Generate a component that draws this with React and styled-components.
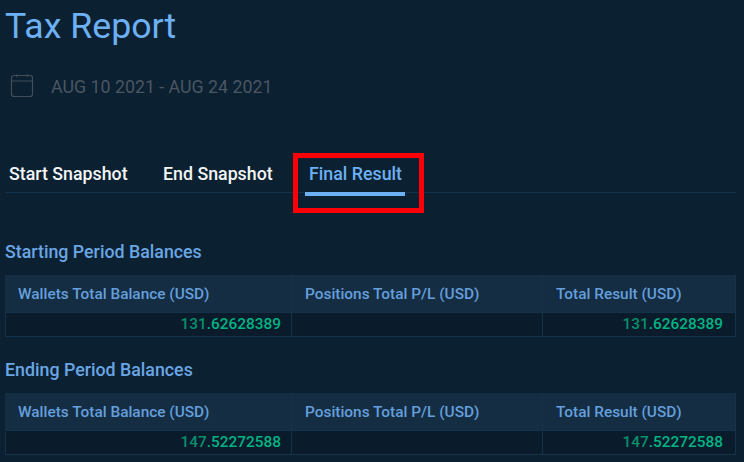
import styled, { createGlobalStyle } from 'styled-components';

const GlobalStyle = createGlobalStyle`
  html, body {
    margin: 0;
    padding: 0;
    width: 744px;
    height: 462px;
    overflow: hidden;
    background-color: #0b2031;
    font-family: Roboto, "Liberation Sans", sans-serif;
  }
`;
const Page = styled.div`
  width: 744px;
  height: 462px;
  padding: 0 8px 0 5px;
  box-sizing: border-box;
  overflow: hidden;
`;
const Title = styled.h1`
  margin: 0;
  height: 52px;
  font-size: 35.7px;
  line-height: 52px;
  font-weight: 400;
  color: #6db0f3;
`;
const DateRow = styled.div`
  display: flex;
  align-items: center;
  gap: 17px;
  height: 28px;
  margin-top: 20px;
  padding-left: 5px;
  font-size: 17.8px;
  color: #4a5662;
`;
const Tabs = styled.div`
  position: relative;
  display: flex;
  box-sizing: border-box;
  height: 53px;
  margin-top: 40px;
  border-bottom: 1px solid #14324a;
`;
const Tab = styled.div`
  box-sizing: border-box;
  width: ${(p) => p.$width}px;
  height: 52px;
  padding-top: 24px;
  padding-left: ${(p) => p.$pad || 0}px;
  font-size: 17.8px;
  line-height: 20px;
  font-weight: 500;
  white-space: nowrap;
  color: ${(p) => (p.$active ? '#6db0f3' : '#f2f4f5')};
`;
const Underline = styled.div`
  width: 100px;
  height: 4px;
  margin: 8px 0 0 -4px;
  background-color: #6db0f3;
`;
const Highlight = styled.div`
  position: absolute;
  left: 288px;
  top: 13px;
  width: 131px;
  height: 60px;
  box-sizing: border-box;
  border: 5px solid #fb0007;
`;
const SectionTitle = styled.h2`
  margin: ${(p) => p.$top}px 0 0;
  height: 20px;
  font-size: 17.8px;
  line-height: 20px;
  font-weight: 500;
  color: #6aa6e4;
`;
const Table = styled.div`
  display: grid;
  grid-template-columns: 287px 251px 193px;
  grid-template-rows: 38px 24px;
  width: 731px;
  margin-top: 13px;
`;
const HeadCell = styled.div`
  box-sizing: border-box;
  padding-left: 13px;
  font-size: 15.4px;
  line-height: 38px;
  font-weight: 500;
  white-space: nowrap;
  color: #659fdc;
  background-color: #142d43;
  border-bottom: 1px solid #14324a;
  border-right: 1px solid #14324a;
`;
const ValueCell = styled.div`
  box-sizing: border-box;
  padding-right: ${(p) => p.$pad || 0}px;
  text-align: right;
  font-size: 15.4px;
  line-height: 22px;
  font-weight: 500;
  color: #00b383;
  background-color: #0a1c2b;
  border-bottom: 1px solid #14324a;
  border-right: 1px solid #14324a;
  &:nth-child(4) {
    border-left: 1px solid #14324a;
  }
`;
const Dim = styled.span`
  color: #078f6c;
`;

const CalendarIcon = () => (
  <svg width="24" height="24" viewBox="0 0 24 24" fill="none" stroke="#414e5a" strokeWidth="1.2">
    <rect x="1.5" y="1.5" width="21" height="21" rx="2.5" />
    <path d="M1.5 7h21M6.5 0.5v2.5M17.5 0.5v2.5" />
  </svg>
);

const BalanceTable = ({ whole, fraction }) => (
  <Table>
    <HeadCell>Wallets Total Balance (USD)</HeadCell>
    <HeadCell>Positions Total P/L (USD)</HeadCell>
    <HeadCell>Total Result (USD)</HeadCell>
    <ValueCell $pad={10}>
      <Dim>{whole}</Dim>.{fraction}
    </ValueCell>
    <ValueCell />
    <ValueCell $pad={12}>
      <Dim>{whole}</Dim>.{fraction}
    </ValueCell>
  </Table>
);

const App = () => {
  return (
    <Page>
      <GlobalStyle />
      <Title>Tax Report</Title>
      <DateRow>
        <CalendarIcon />
        AUG 10 2021 - AUG 24 2021
      </DateRow>
      <Tabs>
        <Tab $width={158} $pad={4}>Start Snapshot</Tab>
        <Tab $width={146}>End Snapshot</Tab>
        <Tab $active $width={110}>
          Final Result
          <Underline />
        </Tab>
        <Highlight />
      </Tabs>
      <SectionTitle $top={49}>Starting Period Balances</SectionTitle>
      <BalanceTable whole="131" fraction="62628389" />
      <SectionTitle $top={23}>Ending Period Balances</SectionTitle>
      <BalanceTable whole="147" fraction="52272588" />
    </Page>
  );
};
export default App;
